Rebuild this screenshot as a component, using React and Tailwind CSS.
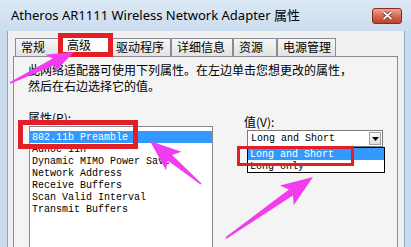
import React from 'react';

const cjk = { fontFamily: '"Noto Sans CJK SC", "Noto Sans", sans-serif' };
const mono = { fontFamily: '"Liberation Mono", "DejaVu Sans Mono", monospace' };

const tabs = [
  { label: '常规', w: 'w-[44px]' },
  { label: '高级', w: 'w-[51px]', active: true },
  { label: '驱动程序', w: 'w-[61px]' },
  { label: '详细信息', w: 'w-[62px]' },
  { label: '资源', w: 'w-[44px]' },
  { label: '电源管理', w: 'w-[59px]' },
];

const props = [
  '802.11b Preamble',
  'Adhoc 11n',
  'Dynamic MIMO Power Save',
  'Network Address',
  'Receive Buffers',
  'Scan Valid Interval',
  'Transmit Buffers',
];

// pink call-out arrow, tail -> tip
function arrowPoints([tx, ty], [px, py], L, hw, sh = 3.5, st = 0.8) {
  const dx = px - tx;
  const dy = py - ty;
  const len = Math.hypot(dx, dy);
  const ux = dx / len;
  const uy = dy / len;
  const nx = -uy;
  const ny = ux;
  const bx = px - ux * L;
  const by = py - uy * L;
  const kx = bx - ux * 5;
  const ky = by - uy * 5;
  const pts = [
    [tx + nx * st, ty + ny * st],
    [bx + nx * sh, by + ny * sh],
    [kx + nx * hw, ky + ny * hw],
    [px, py],
    [kx - nx * hw, ky - ny * hw],
    [bx - nx * sh, by - ny * sh],
    [tx - nx * st, ty - ny * st],
  ];
  return pts.map((p) => p.map((v) => v.toFixed(1)).join(',')).join(' ');
}

const Arrows = () => (
  <svg className="absolute inset-0 pointer-events-none" width="411" height="247" viewBox="0 0 411 247">
    <polygon points={arrowPoints([10, 83], [74, 52], 22, 10)} fill="#f23cf0" />
    <polygon points={arrowPoints([201, 184], [150, 141], 26, 12)} fill="#f23cf0" />
    <polygon points={arrowPoints([226, 238], [313, 177], 27, 12)} fill="#f23cf0" />
  </svg>
);

const App = () => {
  return (
    <div className="relative w-[411px] h-[247px] overflow-hidden bg-[#c9dcef] flex flex-col">
      {/* title bar */}
      <div className="h-[31px] shrink-0 flex items-center justify-between pl-[11px] pr-[9px] bg-gradient-to-b from-[#dce9f6] to-[#cbdcee]">
        <span className="text-[13px] text-black leading-none" style={{ fontFamily: '"Noto Sans", "Noto Sans CJK SC", sans-serif' }}>
          Atheros AR1111 Wireless Network Adapter 属性
        </span>
        <div className="w-[30px] h-[16px] rounded-[3px] border border-[#8a2c20] bg-gradient-to-b from-[#e9a596] via-[#d46a55] to-[#c0402a] flex items-center justify-center">
          <svg width="11" height="9" viewBox="0 0 11 9">
            <path d="M1.5 1 L9.5 8 M9.5 1 L1.5 8" stroke="#5a1a12" strokeWidth="3" />
            <path d="M1.5 1 L9.5 8 M9.5 1 L1.5 8" stroke="#ffffff" strokeWidth="1.8" />
          </svg>
        </div>
      </div>

      {/* dialog body */}
      <div className="flex-1 ml-[7px] mr-[6px] border-l border-r border-[#8ea6c2] bg-[#f0f0f0] flex flex-col">
        <div className="h-[25px] shrink-0 flex items-end pl-[7px]" style={cjk}>
          {tabs.map((t) =>
            t.active ? (
              <div
                key={t.label}
                className={`${t.w} h-[22px] -mb-px z-10 border border-b-0 border-[#898c95] bg-white pl-[7px] text-[12px] leading-[18px] text-black`}
              >
                {t.label}
              </div>
            ) : (
              <div
                key={t.label}
                className={`${t.w} h-[18px] border border-b-0 border-[#898c95] bg-gradient-to-b from-[#f6f6f6] to-[#e2e2e2] pl-[5px] text-[12px] leading-[16px] text-black`}
              >
                {t.label}
              </div>
            )
          )}
        </div>

        <div className="ml-[5px] w-[385px] flex-1 border border-[#898c95] bg-[#f4f4f4] pl-[14px] pt-[5px]">
          <p className="text-[12px] leading-[16px] text-black" style={cjk}>
            此网络适配器可使用下列属性。在左边单击您想更改的属性，
            <br />
            然后在右边选择它的值。
          </p>

          <div className="flex mt-[16px]">
            <div className="flex flex-col">
              <div className="text-[12px] leading-[16px] text-black" style={cjk}>
                属性(P):
              </div>
              <div className="ml-px w-[184px] h-[130px] border border-[#828790] bg-white pt-[4px]" style={mono}>
                {props.map((p, i) => (
                  <div
                    key={p}
                    className={`h-[12px] pl-[2px] text-[10px] leading-[13px] whitespace-pre ${i === 0 ? 'bg-[#3399ff] text-white' : 'text-black'}`}
                  >
                    {p}
                  </div>
                ))}
              </div>
            </div>

            <div className="flex flex-col ml-[31px] mt-[4px]">
              <div className="text-[12px] leading-[16px] text-black" style={cjk}>
                值(V):
              </div>
              <div className="relative ml-[3px] w-[136px] h-[17px] border border-[#7a7a7a] bg-white flex items-center justify-between" style={mono}>
                <span className="pl-[3px] text-[10px] leading-[15px] text-black whitespace-pre">Long and Short</span>
                <div className="w-[12px] h-[13px] mr-px border border-[#a0a0a0] bg-gradient-to-b from-[#fdfdfd] to-[#dcdcdc] flex items-center justify-center">
                  <svg width="7" height="4" viewBox="0 0 7 4">
                    <path d="M0 0 L7 0 L3.5 4 Z" fill="#000" />
                  </svg>
                </div>
                <div className="absolute left-[-1px] top-[16px] w-[138px] border border-black bg-white z-10">
                  <div className="h-[12px] pl-[2px] bg-[#3399ff] text-white text-[10px] leading-[13px] whitespace-pre">Long and Short</div>
                  <div className="h-[12px] pl-[2px] text-black text-[10px] leading-[13px] whitespace-pre">Long only</div>
                </div>
              </div>
            </div>
          </div>
        </div>
      </div>

      {/* red highlight boxes */}
      <div className="absolute left-[58px] top-[33px] w-[55px] h-[24px] border-[5px] border-[#e31e24] z-20" />
      <div className="absolute left-[18px] top-[120px] w-[120px] h-[29px] border-[5px] border-[#e31e24] z-20" />
      <div className="absolute left-[237px] top-[146px] w-[117px] h-[20px] border-[3px] border-[#e31e24] z-20" />

      <div className="absolute inset-0 z-30 pointer-events-none">
        <Arrows />
      </div>
    </div>
  );
};

export default App;
